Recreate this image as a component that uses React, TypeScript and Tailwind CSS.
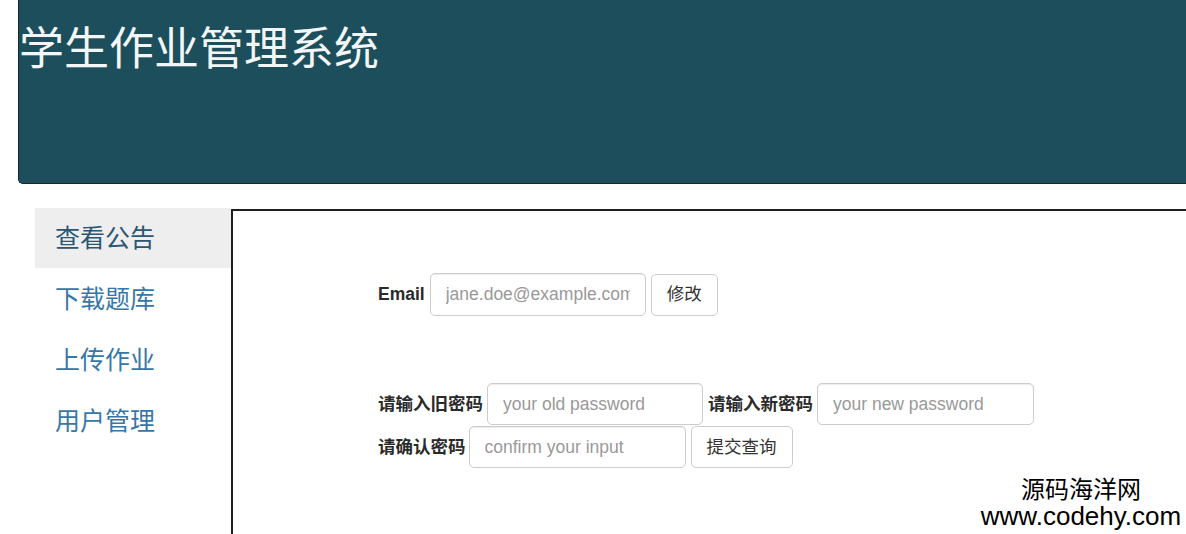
import React from "react";

const CJK = "font-['Liberation_Sans','Noto_Sans_CJK_SC',sans-serif]";

function Input({ placeholder, w }: { placeholder: string; w: string }) {
  return (
    <input
      type="text"
      placeholder={placeholder}
      className={`${w} h-[42px] shrink-0 rounded-[5px] border border-[#cccccc] bg-white px-[15px] text-[17.5px] text-[#555] shadow-[inset_0_1px_1px_rgba(0,0,0,0.075)] outline-none placeholder:text-[#999] ${CJK}`}
    />
  );
}

function Btn({ children, w }: { children: React.ReactNode; w: string }) {
  return (
    <button
      className={`${w} h-[42px] shrink-0 rounded-[5px] border border-[#cccccc] bg-white text-[17.5px] text-[#333] ${CJK}`}
    >
      {children}
    </button>
  );
}

export default function App() {
  const items = ["查看公告", "下载题库", "上传作业", "用户管理"];
  return (
    <div className={`relative h-[534px] w-[1186px] overflow-hidden bg-white ${CJK}`}>
      <header className="ml-[18px] h-[184px] rounded-bl-[5px] border-b border-l border-[#17272c] bg-[#1c4e5c] pt-[25px]">
        <h1 className="text-[45px] leading-[1.1] font-normal text-[#f2f6f7]">学生作业管理系统</h1>
      </header>

      <div className="mt-[24px] flex h-[326px] pl-[35px]">
        <nav className="flex w-[196px] shrink-0 flex-col gap-[1px]">
          {items.map((t, i) => (
            <div
              key={t}
              className={`flex h-[60px] items-center pl-[20px] pt-[2px] text-[25px] ${
                i === 0 ? "bg-[#eeeeee] text-[#2b5674]" : "text-[#3777a8]"
              }`}
            >
              {t}
            </div>
          ))}
        </nav>
        <main className="mt-[1px] flex-1 border-l-2 border-t-2 border-[#1e1e1e] pl-[145px]">
          <div className="mt-[62px] flex h-[43px] items-center">
            <span className="mr-[5px] text-[17.5px] font-bold text-[#2a2a2a]">Email</span>
            <Input placeholder="jane.doe@example.com" w="w-[216px] h-[43px]" />
            <div className="ml-[5px]">
              <Btn w="w-[67px]">修改</Btn>
            </div>
          </div>

          <div className="mt-[67px] flex flex-col gap-[1px]">
            <div className="flex h-[42px] items-center">
              <span className="mr-[4px] text-[17.5px] font-bold text-[#2a2a2a]">请输入旧密码</span>
              <Input placeholder="your old password" w="w-[216px]" />
              <span className="ml-[5px] mr-[4px] text-[17.5px] font-bold text-[#2a2a2a]">请输入新密码</span>
              <Input placeholder="your new password" w="w-[217px]" />
            </div>
            <div className="flex h-[42px] items-center">
              <span className="mr-[3px] text-[17.5px] font-bold text-[#2a2a2a]">请确认密码</span>
              <Input placeholder="confirm your input" w="w-[217px]" />
              <div className="ml-[5px]">
                <Btn w="w-[102px]">提交查询</Btn>
              </div>
            </div>
          </div>
        </main>
      </div>

      <div className="absolute left-[978px] top-[477px] w-[206px] text-center text-black">
        <div className="text-[24px] leading-[26px]">源码海洋网</div>
        <div className="text-[26px] leading-[26px]">www.codehy.com</div>
      </div>
    </div>
  );
}
